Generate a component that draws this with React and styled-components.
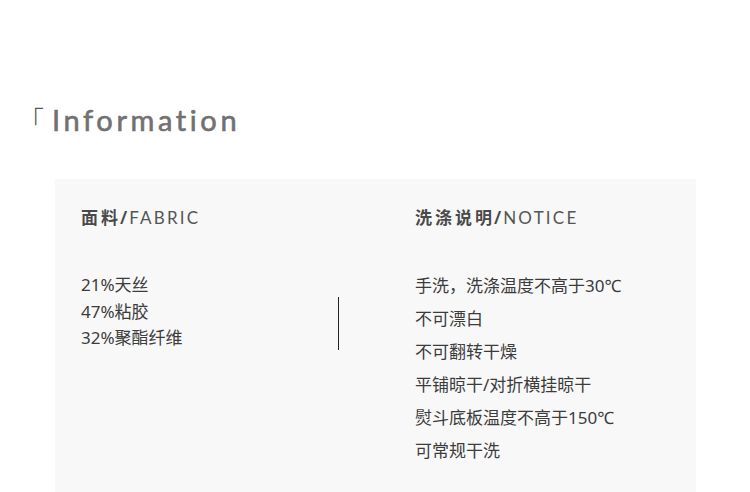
import React from "react";
import styled, { createGlobalStyle } from "styled-components";

const GlobalStyle = createGlobalStyle`
  body {
    margin: 0;
    background: #ffffff;
    font-family: "Noto Sans", "Noto Sans CJK SC", sans-serif;
  }
`;

const fabric = ["21%天丝", "47%粘胶", "32%聚酯纤维"];

const notice = [
  "手洗，洗涤温度不高于30℃",
  "不可漂白",
  "不可翻转干燥",
  "平铺晾干/对折横挂晾干",
  "熨斗底板温度不高于150℃",
  "可常规干洗",
];

const App = () => {
  return (
    <Page>
      <GlobalStyle />
      <TitleRow>
        <Bracket>「</Bracket>
        <Title>Information</Title>
      </TitleRow>
      <Panel>
        <Column>
          <Heading>
            <HeadingCn>面料</HeadingCn>
            <Slash>/</Slash>
            <HeadingEn>FABRIC</HeadingEn>
          </Heading>
          <List $top={43} $lineHeight={26.5}>
            {fabric.map((item) => (
              <Item key={item}>{item}</Item>
            ))}
          </List>
        </Column>
        <Divider />
        <Column>
          <Heading>
            <HeadingCn>洗涤说明</HeadingCn>
            <Slash>/</Slash>
            <HeadingEn>NOTICE</HeadingEn>
          </Heading>
          <List $top={39.5} $lineHeight={33}>
            {notice.map((item) => (
              <Item key={item}>{item}</Item>
            ))}
          </List>
        </Column>
      </Panel>
    </Page>
  );
};

export default App;

const Page = styled.div`
  width: 750px;
  height: 492px;
  overflow: hidden;
  padding-top: 100px;
  box-sizing: border-box;
`;

const TitleRow = styled.div`
  display: flex;
  align-items: flex-start;
  padding-left: 18px;
  height: 79px;
`;

const Bracket = styled.span`
  font-family: "Noto Sans CJK SC", sans-serif;
  font-weight: 300;
  font-size: 26px;
  line-height: 26px;
  color: #555;
  margin-top: 6px;
  width: 34px;
`;

const Title = styled.h1`
  margin: 0;
  font-family: "Lato", sans-serif;
  font-weight: 400;
  font-size: 29px;
  line-height: 40px;
  letter-spacing: 3.6px;
  color: #717171;
  -webkit-text-stroke: 0.6px #717171;
`;

const Panel = styled.div`
  margin-left: 55px;
  width: 641px;
  height: 320px;
  background: #f8f8f8;
  box-sizing: border-box;
  padding: 26px 0 0 26px;
  display: grid;
  grid-template-columns: 257px 1px 1fr;
`;

const Column = styled.div`
  display: flex;
  flex-direction: column;
  &:last-child {
    padding-left: 76px;
  }
`;

const Heading = styled.div`
  display: flex;
  align-items: baseline;
  height: 24px;
  line-height: 24px;
  color: #4a4a4a;
`;

const HeadingCn = styled.span`
  font-family: "Noto Sans CJK SC", sans-serif;
  font-weight: 700;
  font-size: 17px;
  letter-spacing: 3px;
`;

const Slash = styled.span`
  font-size: 18px;
  font-weight: 600;
  margin: 0 2px 0 -1px;
`;

const HeadingEn = styled.span`
  font-family: "Lato", sans-serif;
  font-weight: 400;
  font-size: 17px;
  letter-spacing: 2.2px;
  color: #555;
`;

const List = styled.div`
  margin-top: ${(p) => p.$top}px;
  display: flex;
  flex-direction: column;
  line-height: ${(p) => p.$lineHeight}px;
`;

const Item = styled.div`
  font-size: 17px;
  color: #3c3c3c;
`;

const Divider = styled.div`
  width: 1px;
  height: 53px;
  background: #222;
  margin-top: 92px;
`;
